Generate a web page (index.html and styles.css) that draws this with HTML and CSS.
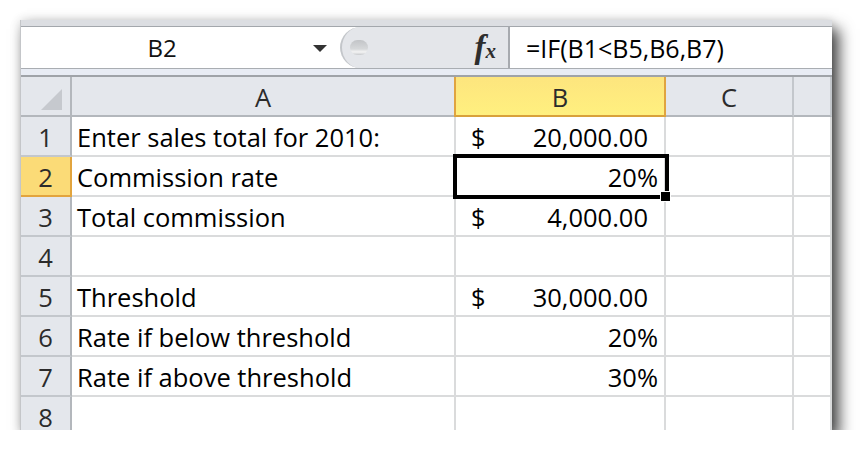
FILE: index.html
```html
<!DOCTYPE html>
<html>
<head>
<meta charset="utf-8">
<link rel="stylesheet" href="styles.css">
</head>
<body>
<div class="window">
  <div class="topstrip"></div>
  <div class="fbar">
    <div class="namebox"><span class="nb-text">B2</span><span class="arrow"></span></div>
    <div class="fpanel"><span class="ball"></span><span class="fx"><i>f</i><i class="x">x</i></span></div>
    <div class="finput">=IF(B1&lt;B5,B6,B7)</div>
  </div>
  <div class="band"></div>
  <div class="sheet">
    <div class="row head">
      <div class="rh corner"><span class="tri"></span></div>
      <div class="ch a">A</div>
      <div class="ch b sel">B</div>
      <div class="ch c">C</div>
      <div class="ch d"></div>
    </div>
    <div class="row">
      <div class="rh">1</div>
      <div class="cell a">Enter sales total for 2010:</div>
      <div class="cell b cur"><span>$</span><span>20,000.00</span></div>
      <div class="cell c"></div><div class="cell d"></div>
    </div>
    <div class="row">
      <div class="rh sel">2</div>
      <div class="cell a">Commission rate</div>
      <div class="cell b pct active">20%<span class="selbox"></span><span class="handle"></span></div>
      <div class="cell c"></div><div class="cell d"></div>
    </div>
    <div class="row">
      <div class="rh">3</div>
      <div class="cell a">Total commission</div>
      <div class="cell b cur"><span>$</span><span>4,000.00</span></div>
      <div class="cell c"></div><div class="cell d"></div>
    </div>
    <div class="row">
      <div class="rh">4</div>
      <div class="cell a"></div>
      <div class="cell b"></div>
      <div class="cell c"></div><div class="cell d"></div>
    </div>
    <div class="row">
      <div class="rh">5</div>
      <div class="cell a">Threshold</div>
      <div class="cell b cur"><span>$</span><span>30,000.00</span></div>
      <div class="cell c"></div><div class="cell d"></div>
    </div>
    <div class="row">
      <div class="rh">6</div>
      <div class="cell a">Rate if below threshold</div>
      <div class="cell b pct">20%</div>
      <div class="cell c"></div><div class="cell d"></div>
    </div>
    <div class="row">
      <div class="rh">7</div>
      <div class="cell a">Rate if above threshold</div>
      <div class="cell b pct">30%</div>
      <div class="cell c"></div><div class="cell d"></div>
    </div>
    <div class="row last">
      <div class="rh">8</div>
      <div class="cell a"></div>
      <div class="cell b"></div>
      <div class="cell c"></div><div class="cell d"></div>
    </div>
  </div>
</div>
</body>
</html>
```
FILE: styles.css
```css
html, body { margin: 0; padding: 0; background: #fff; }
body { padding: 20px 0 0 20px; font-family: "Open Sans", "Noto Sans", sans-serif; }
.window {
  width: 812px; height: 410px; overflow: hidden; background: #fff;
  box-shadow: 7px 9px 14px rgba(0,0,0,0.72), 0 0 10px rgba(0,0,0,0.14);
  border-left: 1px solid #c4c6c9; box-sizing: border-box;
}
.topstrip { height: 6px; background: #dcdee2; border-bottom: 1px solid #a3a7ac; }
.fbar { height: 41px; display: flex; border-bottom: 1px solid #a9adb2; background: #fff; }
.namebox { width: 319px; display: flex; align-items: center; position: relative; }
.nb-text { width: 282px; text-align: center; font-size: 24px; color: #111; }
.arrow { width: 0; height: 0; border-left: 7px solid transparent; border-right: 7px solid transparent; border-top: 7px solid #333; margin-left: 10px; margin-top: 2px; }
.fpanel {
  width: 166px; background: #e4e6ea; border-left: 2px solid #c3c6ca;
  border-radius: 21px 0 0 21px; border-right: 2px solid #a7aaaf;
  display: flex; align-items: center; position: relative;
}
.ball { width: 18px; height: 15px; border-radius: 8px; margin-left: 8px;
  background: linear-gradient(#c2c4c7, #d6d8da 60%, #f4f4f4 80%, #c8cacd); }
.fx { margin-left: auto; margin-right: 12px; font-family: "Liberation Serif", serif; color: #2e2e2e; font-size: 33px; line-height: 1; font-weight: 600; }
.fx i { font-style: italic; }
.fx .x { font-size: 21px; margin-left: 0; }
.finput { flex: 1; display: flex; align-items: center; padding-left: 16px; font-size: 25px; color: #000; }
.band { height: 6px; background: #e8ecf4; border-bottom: 2px solid #9fa3a8; }
.sheet { display: flex; flex-direction: column; }
.row { display: flex; height: 40px; flex: none; }
.rh, .ch, .cell { box-sizing: border-box; height: 40px; font-size: 25.5px; line-height: 38px; }
.rh { width: 51px; background: #e4e7ec; border-right: 2px solid #b3b7bc; border-bottom: 2px solid #c3c7cc; text-align: center; color: #2b2b2b; padding-top: 1px; }
.rh.sel { background: #fbdb77; border-bottom-color: #e2a43d; border-right-color: #e2a43d; }
.head .rh { border-bottom-color: #b3b7bc; }
.corner { position: relative; }
.tri { position: absolute; left: 20px; top: 12px; width: 0; height: 0; border-left: 21px solid transparent; border-bottom: 21px solid #c6c9ce; }
.ch { background: #e4e7ec; border-right: 2px solid #c3c7cc; border-bottom: 2px solid #b3b7bc; text-align: center; color: #2b2b2b; padding-top: 1px; }
.ch.sel { background: linear-gradient(#fde57e, #fff07f); border-bottom-color: #d9a13a; border-left: 2px solid #e0a440; border-right-color: #e0a440; margin-left: -2px; width: 212px; }
.a { width: 384px; }
.b { width: 210px; }
.c { width: 128px; }
.d { flex: 1; }
.cell { border-right: 2px solid #dadbdc; border-bottom: 2px solid #dadbdc; color: #000; padding-top: 1px; white-space: nowrap; }
.cell.a { padding-left: 5px; }
.cur { display: flex; justify-content: space-between; padding: 1px 16px 0 15px; }
.pct { text-align: right; padding-right: 6px; }
.active { position: relative; }
.selbox { position: absolute; left: -3px; top: -3px; width: 216px; height: 45px; border: 4px solid #000; box-sizing: border-box; }
.handle { position: absolute; left: 204px; top: 34px; width: 9px; height: 9px; background: #000; border: 1px solid #fff; }
```
